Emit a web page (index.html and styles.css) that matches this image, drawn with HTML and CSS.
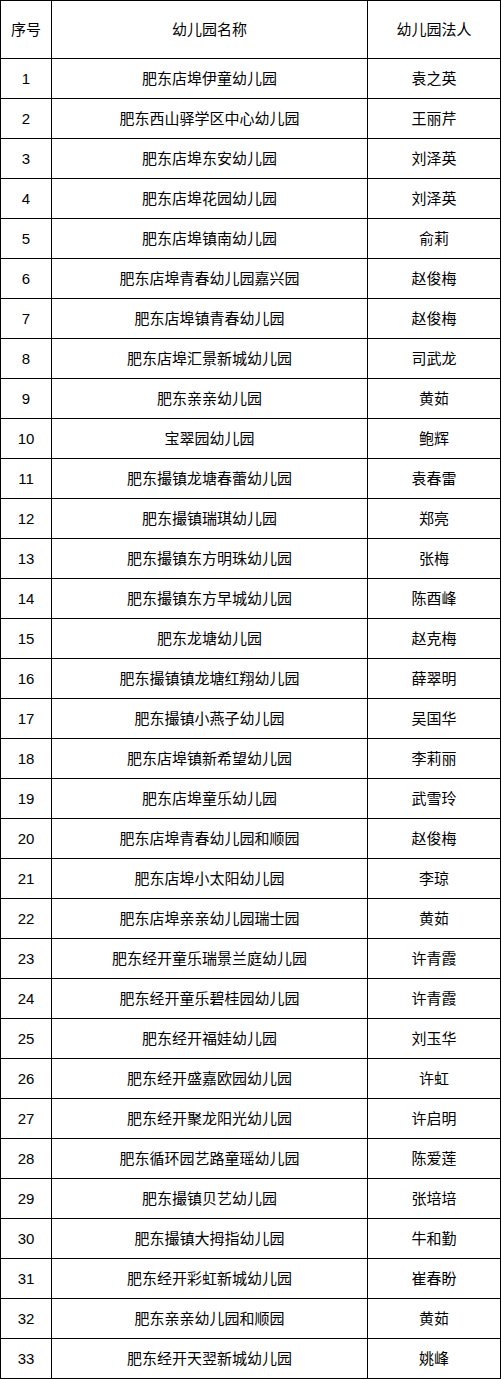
FILE: index.html
```html
<!DOCTYPE html>
<html lang="zh-CN">
<head>
<meta charset="utf-8">
<title>幼儿园名单</title>
<link rel="stylesheet" href="styles.css">
</head>
<body>
<table class="list">
<colgroup><col class="c-no"><col class="c-name"><col class="c-person"></colgroup>
<thead>
<tr><th>序号</th><th>幼儿园名称</th><th>幼儿园法人</th></tr>
</thead>
<tbody>
<tr><td>1</td><td>肥东店埠伊童幼儿园</td><td>袁之英</td></tr>
<tr><td>2</td><td>肥东西山驿学区中心幼儿园</td><td>王丽芹</td></tr>
<tr><td>3</td><td>肥东店埠东安幼儿园</td><td>刘泽英</td></tr>
<tr><td>4</td><td>肥东店埠花园幼儿园</td><td>刘泽英</td></tr>
<tr><td>5</td><td>肥东店埠镇南幼儿园</td><td>俞莉</td></tr>
<tr><td>6</td><td>肥东店埠青春幼儿园嘉兴园</td><td>赵俊梅</td></tr>
<tr><td>7</td><td>肥东店埠镇青春幼儿园</td><td>赵俊梅</td></tr>
<tr><td>8</td><td>肥东店埠汇景新城幼儿园</td><td>司武龙</td></tr>
<tr><td>9</td><td>肥东亲亲幼儿园</td><td>黄茹</td></tr>
<tr><td>10</td><td>宝翠园幼儿园</td><td>鲍辉</td></tr>
<tr><td>11</td><td>肥东撮镇龙塘春蕾幼儿园</td><td>袁春雷</td></tr>
<tr><td>12</td><td>肥东撮镇瑞琪幼儿园</td><td>郑亮</td></tr>
<tr><td>13</td><td>肥东撮镇东方明珠幼儿园</td><td>张梅</td></tr>
<tr><td>14</td><td>肥东撮镇东方早城幼儿园</td><td>陈酉峰</td></tr>
<tr><td>15</td><td>肥东龙塘幼儿园</td><td>赵克梅</td></tr>
<tr><td>16</td><td>肥东撮镇镇龙塘红翔幼儿园</td><td>薛翠明</td></tr>
<tr><td>17</td><td>肥东撮镇小燕子幼儿园</td><td>吴国华</td></tr>
<tr><td>18</td><td>肥东店埠镇新希望幼儿园</td><td>李莉丽</td></tr>
<tr><td>19</td><td>肥东店埠童乐幼儿园</td><td>武雪玲</td></tr>
<tr><td>20</td><td>肥东店埠青春幼儿园和顺园</td><td>赵俊梅</td></tr>
<tr><td>21</td><td>肥东店埠小太阳幼儿园</td><td>李琼</td></tr>
<tr><td>22</td><td>肥东店埠亲亲幼儿园瑞士园</td><td>黄茹</td></tr>
<tr><td>23</td><td>肥东经开童乐瑞景兰庭幼儿园</td><td>许青霞</td></tr>
<tr><td>24</td><td>肥东经开童乐碧桂园幼儿园</td><td>许青霞</td></tr>
<tr><td>25</td><td>肥东经开福娃幼儿园</td><td>刘玉华</td></tr>
<tr><td>26</td><td>肥东经开盛嘉欧园幼儿园</td><td>许虹</td></tr>
<tr><td>27</td><td>肥东经开聚龙阳光幼儿园</td><td>许启明</td></tr>
<tr><td>28</td><td>肥东循环园艺路童瑶幼儿园</td><td>陈爱莲</td></tr>
<tr><td>29</td><td>肥东撮镇贝艺幼儿园</td><td>张培培</td></tr>
<tr><td>30</td><td>肥东撮镇大拇指幼儿园</td><td>牛和勤</td></tr>
<tr><td>31</td><td>肥东经开彩虹新城幼儿园</td><td>崔春盼</td></tr>
<tr><td>32</td><td>肥东亲亲幼儿园和顺园</td><td>黄茹</td></tr>
<tr><td>33</td><td>肥东经开天翌新城幼儿园</td><td>姚峰</td></tr>
</tbody>
</table>
</body>
</html>
```
FILE: styles.css
```css
html, body {
  margin: 0;
  padding: 0;
  background: #ffffff;
}

.list {
  border-collapse: collapse;
  table-layout: fixed;
  width: 500px;
  font-family: "Liberation Sans", "Noto Sans CJK SC", sans-serif;
  font-size: 15px;
  color: #000000;
}

.c-no { width: 51px; }
.c-name { width: 316px; }
.c-person { width: 133px; }

.list th,
.list td {
  border: 1px solid #000000;
  padding: 0;
  text-align: center;
  vertical-align: middle;
  font-weight: normal;
  line-height: 20px;
}

.list th {
  height: 57px;
}

.list td {
  height: 39px;
}
```
